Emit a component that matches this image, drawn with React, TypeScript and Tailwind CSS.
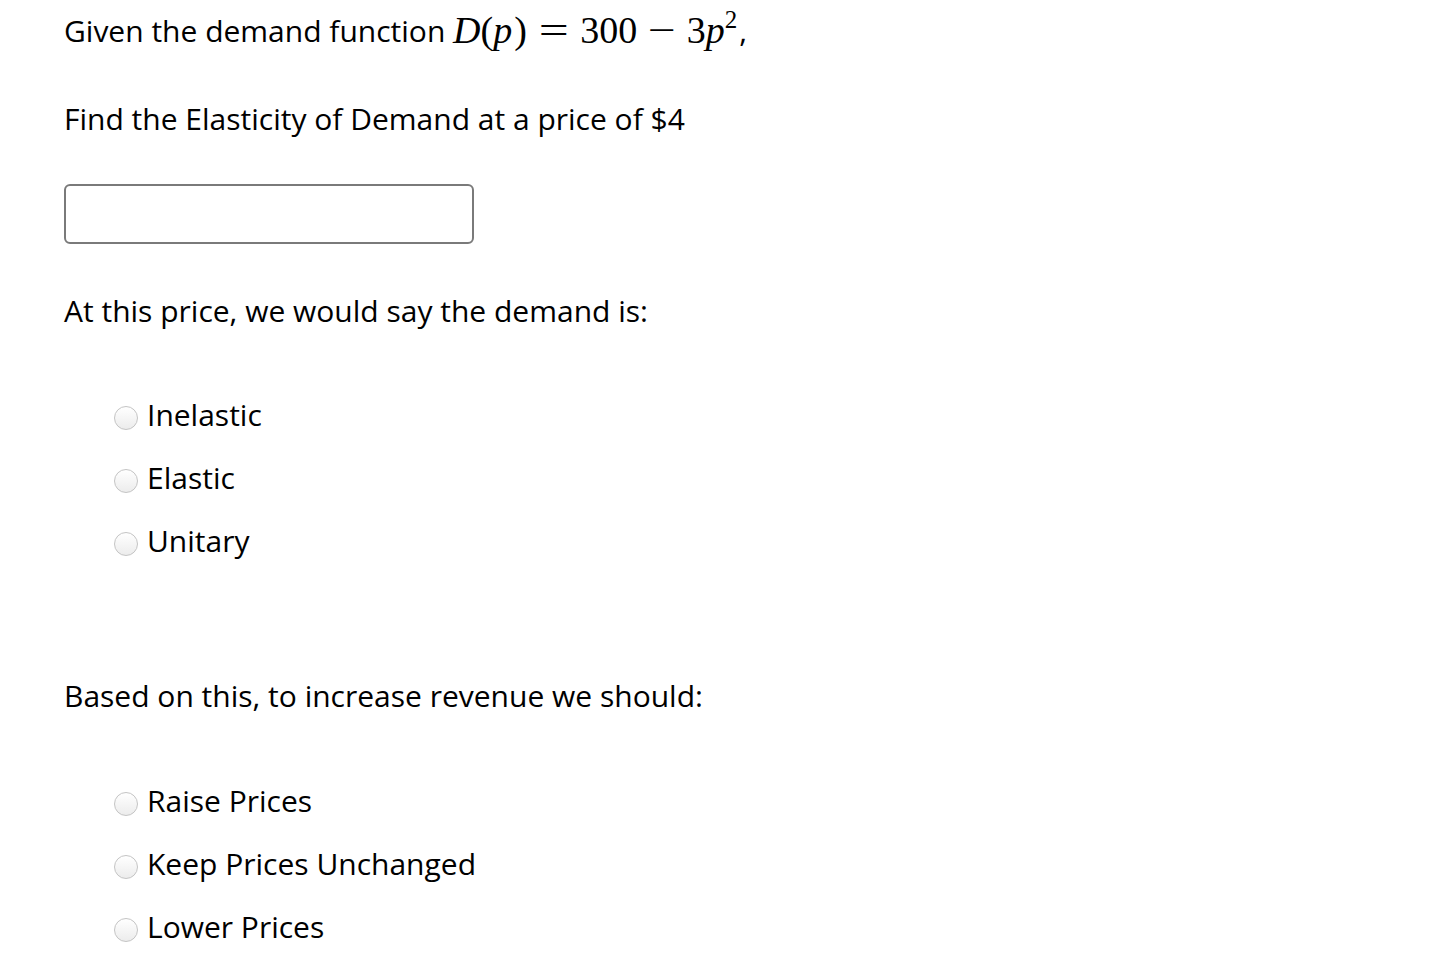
import React from "react";

const sans = { fontFamily: '"Open Sans", "Noto Sans", sans-serif' };
const serif = { fontFamily: '"Liberation Serif", "DejaVu Serif", serif' };

function Radio({ label }: { label: string }) {
  return (
    <label className="flex items-center h-[63px] pl-[50px]">
      <span className="w-[24px] h-[24px] mt-[6px] rounded-full border border-[#c4c4c4] bg-gradient-to-b from-white to-[#ececec] shrink-0" />
      <span className="ml-[9px] text-[30px] text-black">{label}</span>
    </label>
  );
}

export default function App() {
  return (
    <div className="min-h-[980px] bg-white pl-[64px] text-black" style={sans}>
      <div className="h-[60px] flex items-center text-[30px]">
        <span>Given the demand function&nbsp;</span>
        <span className="text-[38px] flex items-baseline leading-none" style={serif}>
          <i>D</i>(<i className="pr-[2px]">p</i>)
          <span className="mx-[16px] scale-x-[1.4] inline-block">=</span>300
          <span className="mx-[14px] scale-x-[1.3] inline-block">−</span>3<i>p</i>
          <span className="text-[25px] relative -top-[15px]">2</span>
        </span>
        <span className="ml-[2px]">,</span>
      </div>
      <div className="h-[60px] mt-[28px] flex items-center text-[30px]">
        Find the Elasticity of Demand at a price of $4
      </div>
      <input
        className="mt-[36px] block w-[410px] h-[60px] border-2 border-[#7a7a7a] rounded-[6px] outline-none"
        type="text"
      />
      <div className="h-[60px] mt-[36px] flex items-center text-[30px]">
        At this price, we would say the demand is:
      </div>
      <div className="mt-[43px]">
        <Radio label="Inelastic" />
        <Radio label="Elastic" />
        <Radio label="Unitary" />
      </div>
      <div className="h-[60px] mt-[93px] flex items-center text-[30px]">
        Based on this, to increase revenue we should:
      </div>
      <div className="mt-[44px]">
        <Radio label="Raise Prices" />
        <Radio label="Keep Prices Unchanged" />
        <Radio label="Lower Prices" />
      </div>
    </div>
  );
}
